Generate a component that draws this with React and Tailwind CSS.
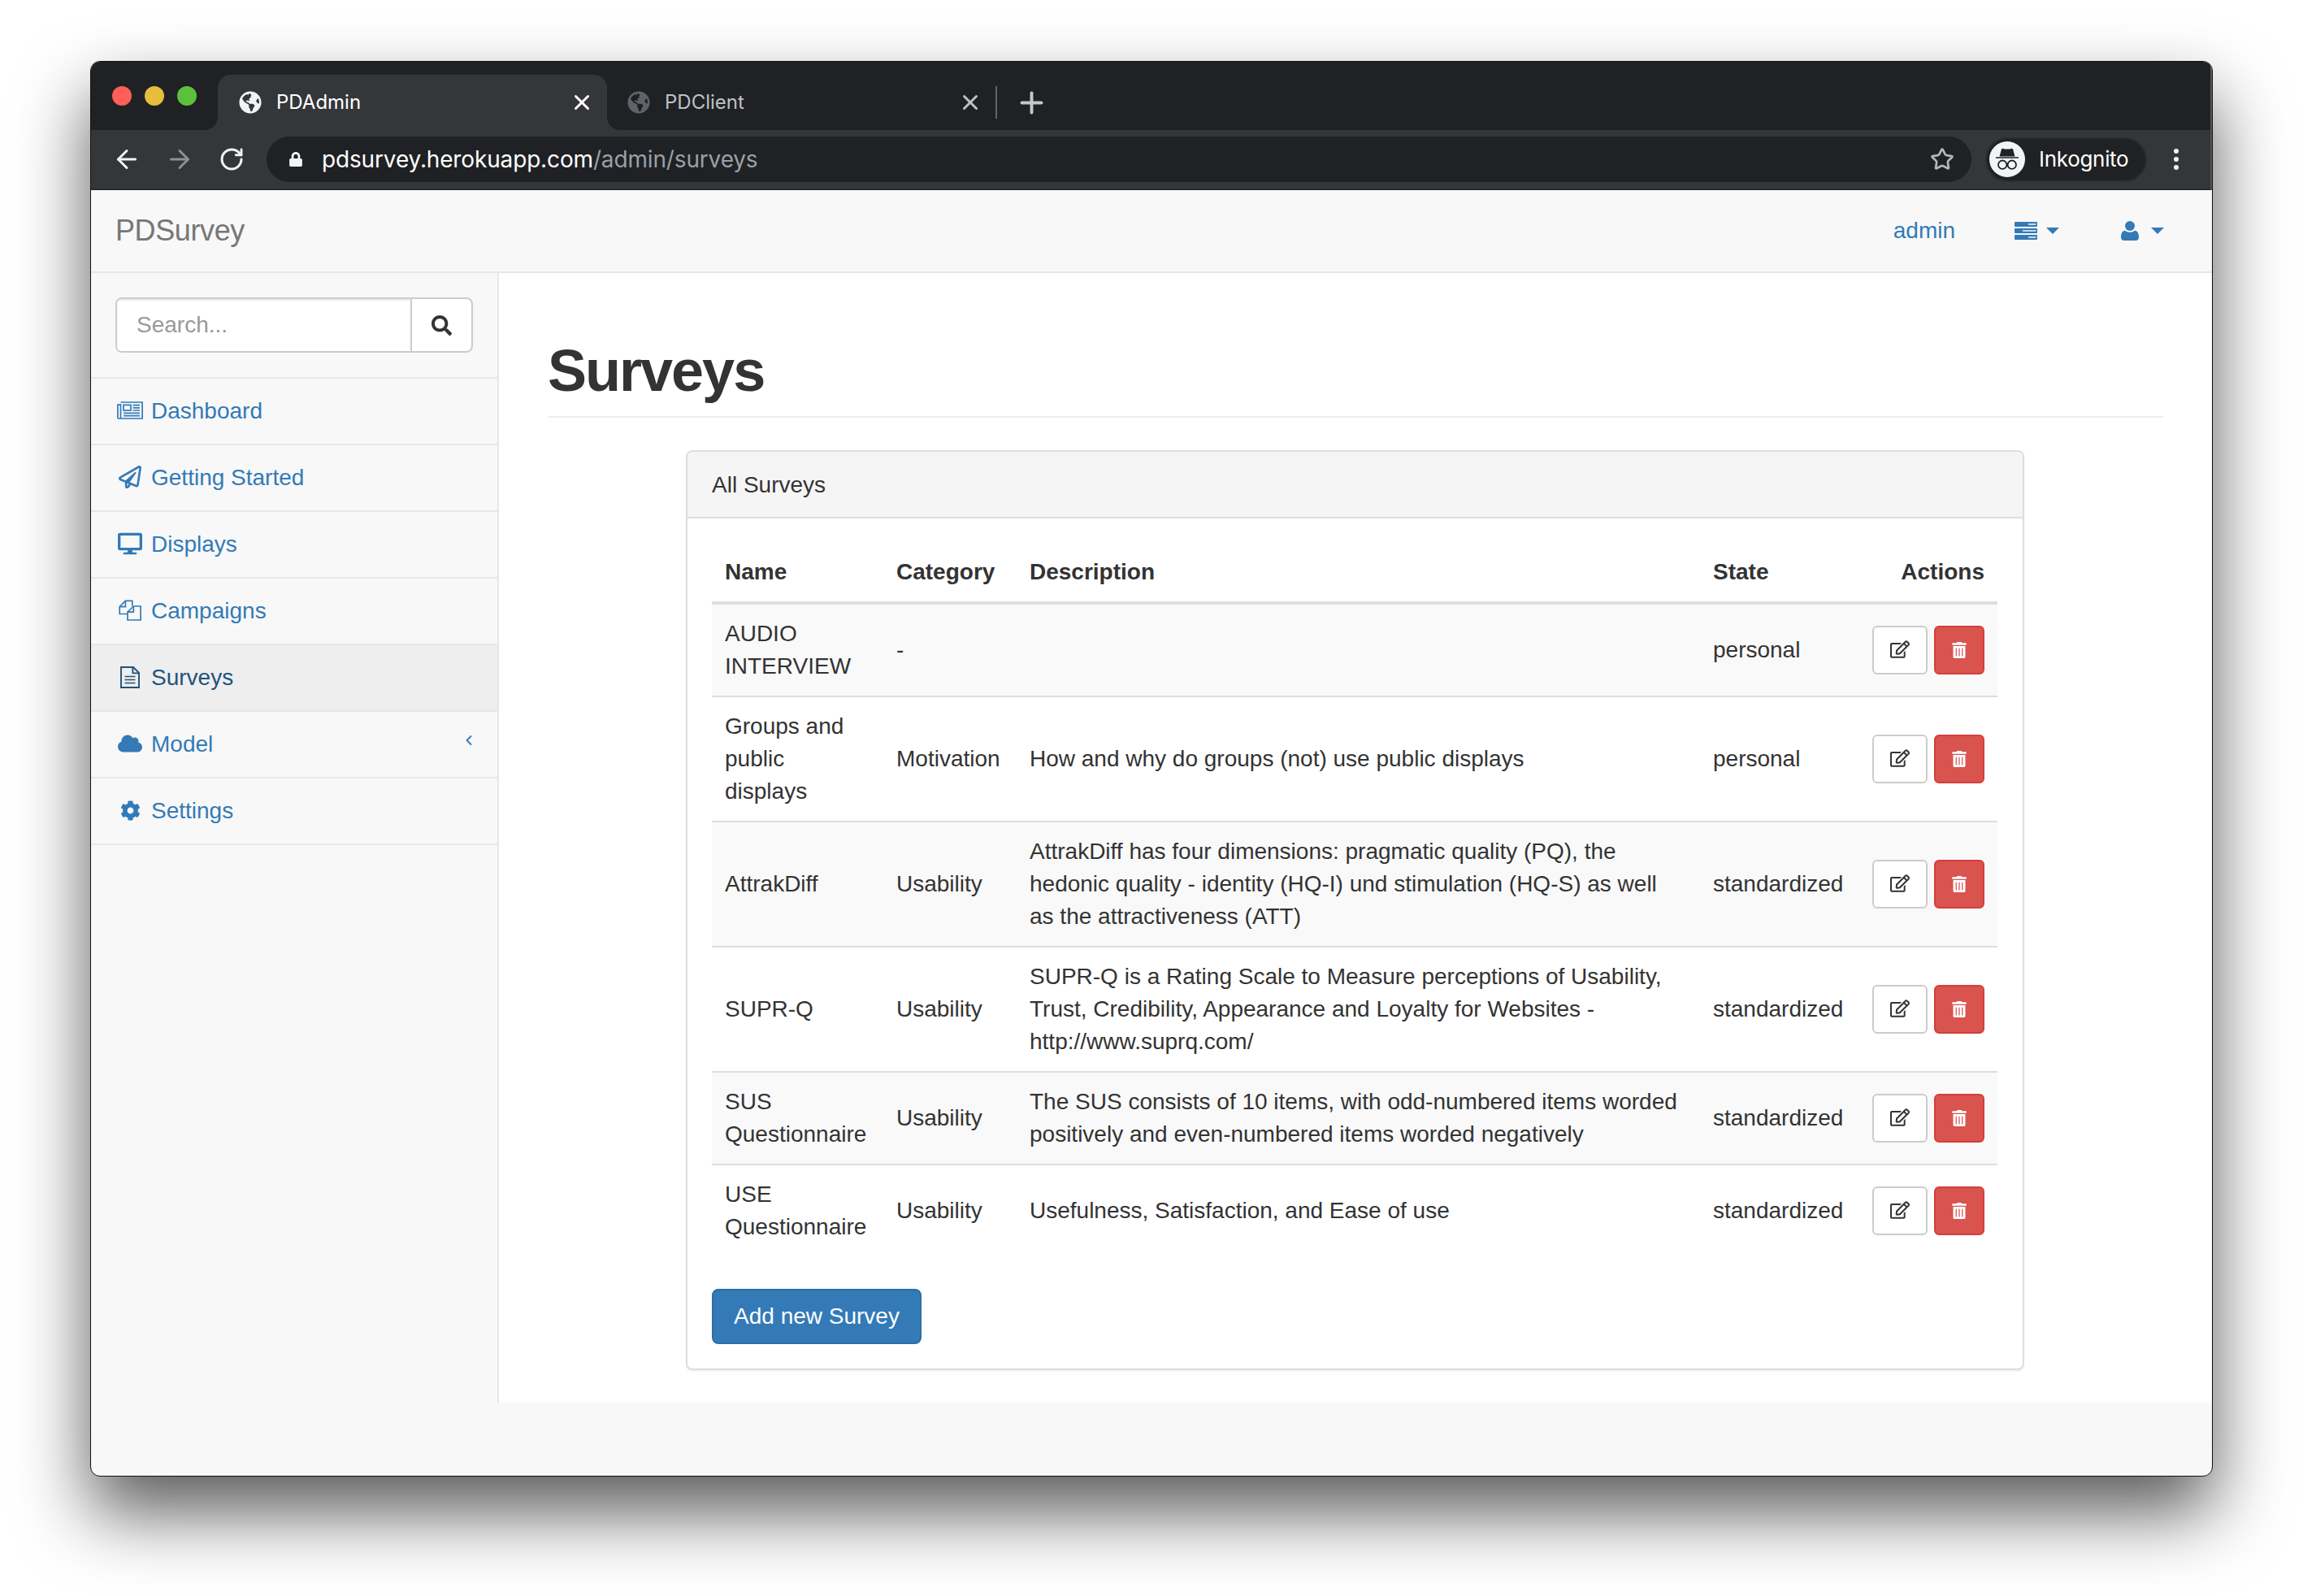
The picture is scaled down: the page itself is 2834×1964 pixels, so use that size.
import React from 'react';
import { ArrowLeft, ArrowRight, RotateCw, Plus, X, Star, ChevronLeft } from 'lucide-react';
import {
  FaGlobeAmericas,
  FaLock,
  FaRegPaperPlane,
  FaDesktop,
  FaCloud,
  FaCog,
  FaSearch,
  FaRegEdit,
  FaTrashAlt,
} from 'react-icons/fa';

const NewspaperIcon = () => (
  <svg width="32" height="22" viewBox="0 0 32 22" fill="none" stroke="currentColor" strokeWidth="1.7">
    <path d="M4.500 1h26.600v20H2.400A1.500 1.500 0 0 1 .9 19.500V4.200h3.600" />
    <path d="M4.500 3v18" />
    <rect x="8" y="4.400" width="9" height="6.600" />
    <path d="M19.500 4.600h8.500M19.500 7.800h8.500M19.500 11h8.500M8 14.400h20M8 17.600h20" />
  </svg>
);

const FilesIcon = () => (
  <svg width="28" height="26" viewBox="0 0 28 26" fill="none" stroke="currentColor" strokeWidth="1.7">
    <path d="M11 17.500H1.200V8.600L8.400 1.400h8.400v6.400" />
    <path d="M8.400 1.600v7H1.400" />
    <path d="M18.300 8h8.800v17H11V15l7.300-7z" />
    <path d="M18.300 8.400v6.800H11.200" />
  </svg>
);

const FileTextIcon = () => (
  <svg width="24" height="27" viewBox="0 0 24 27" fill="none" stroke="currentColor" strokeWidth="1.9">
    <path d="M1 1h15l7 7v18H1z" />
    <path d="M15.400 1v7.400H23" />
    <path d="M5.500 12.500h13M5.500 16.500h13M5.500 20.500h13" strokeWidth="1.500" />
  </svg>
);

const ServerIcon = () => (
  <svg width="28" height="22" viewBox="0 0 28 22">
    <rect y="0" width="28" height="6" rx="1" fill="currentColor" />
    <rect y="8" width="28" height="6" rx="1" fill="currentColor" />
    <rect y="16" width="28" height="6" rx="1" fill="currentColor" />
    <path d="M17 3h9.500M10 11h16.500M17 19h9.500" stroke="#f8f8f8" strokeWidth="1.600" />
  </svg>
);

const UserIcon = () => (
  <svg width="22" height="24" viewBox="0 0 22 24" fill="currentColor">
    <circle cx="11" cy="6" r="6" />
    <path d="M0 20c0-4.500 1.500-8 5-8.300 1.500 1.300 3.700 2.100 6 2.100s4.500-.8 6-2.100c3.500.3 5 3.800 5 8.300 0 2.500-1.700 4-3.700 4H3.700C1.700 24 0 22.500 0 20z" />
  </svg>
);

const IncognitoIcon = () => (
  <svg width="30" height="34" viewBox="0 0 30 34" fill="none" stroke="#202124">
    <path d="M5.500 13.500 8 4.500c.2-.7.8-1 1.400-.8l2.600.8h6l2.600-.8c.6-.2 1.200.1 1.400.8l2.500 9z" fill="#202124" stroke="none" />
    <path d="M1 15h28" strokeWidth="1.600" />
    <circle cx="9.200" cy="23.700" r="5.200" strokeWidth="1.800" />
    <circle cx="20.800" cy="23.700" r="5.200" strokeWidth="1.800" />
  </svg>
);

const Caret = () => (
  <span className="inline-block w-0 h-0 border-x-[8px] border-x-transparent border-t-[8px] border-t-[#337ab7]" />
);

const sideItems = [
  { label: 'Dashboard', icon: <NewspaperIcon /> },
  { label: 'Getting Started', icon: <FaRegPaperPlane size={28} /> },
  { label: 'Displays', icon: <FaDesktop size={30} /> },
  { label: 'Campaigns', icon: <FilesIcon /> },
  { label: 'Surveys', icon: <FileTextIcon />, active: true },
  { label: 'Model', icon: <FaCloud size={30} />, more: true },
  { label: 'Settings', icon: <FaCog size={25} /> },
];

const surveys = [
  { name: 'AUDIO INTERVIEW', category: '-', description: '', state: 'personal' },
  {
    name: 'Groups and public displays',
    category: 'Motivation',
    description: 'How and why do groups (not) use public displays',
    state: 'personal',
  },
  {
    name: 'AttrakDiff',
    category: 'Usability',
    description:
      'AttrakDiff has four dimensions: pragmatic quality (PQ), the hedonic quality - identity (HQ-I) und stimulation (HQ-S) as well as the attractiveness (ATT)',
    state: 'standardized',
  },
  {
    name: 'SUPR-Q',
    category: 'Usability',
    description:
      'SUPR-Q is a Rating Scale to Measure perceptions of Usability, Trust, Credibility, Appearance and Loyalty for Websites - http://www.suprq.com/',
    state: 'standardized',
  },
  {
    name: 'SUS Questionnaire',
    category: 'Usability',
    description:
      'The SUS consists of 10 items, with odd-numbered items worded positively and even-numbered items worded negatively',
    state: 'standardized',
  },
  {
    name: 'USE Questionnaire',
    category: 'Usability',
    description: 'Usefulness, Satisfaction, and Ease of use',
    state: 'standardized',
  },
];

const BrowserChrome = () => (
  <div className="font-['Inter',sans-serif] border-r-2 border-[#56575a]">
    {/* Tab strip */}
    <div className="h-[84px] bg-[#202124] flex items-end">
      <div className="w-[156px] h-full flex items-center gap-[16px] pl-[26px]">
        <span className="w-[24px] h-[24px] rounded-full bg-[#fe5f58] shrink-0" />
        <span className="w-[24px] h-[24px] rounded-full bg-[#e5bf3c] shrink-0" />
        <span className="w-[24px] h-[24px] rounded-full bg-[#5cc13a] shrink-0" />
      </div>
      <div className="relative w-[479px] h-[68px] bg-[#35363a] rounded-t-[16px] flex items-center pl-[26px] pr-[16px] text-white">
        <span className="absolute -left-[16px] bottom-0 w-[16px] h-[16px] bg-[#35363a]">
          <span className="block w-full h-full bg-[#202124] rounded-br-[16px]" />
        </span>
        <span className="absolute -right-[16px] bottom-0 w-[16px] h-[16px] bg-[#35363a]">
          <span className="block w-full h-full bg-[#202124] rounded-bl-[16px]" />
        </span>
        <FaGlobeAmericas size={28} className="text-[#f1f3f4] shrink-0" />
        <span className="ml-[18px] text-[24px] leading-none">PDAdmin</span>
        <X size={30} strokeWidth={2.4} className="ml-auto" />
      </div>
      <div className="w-[478px] h-[68px] flex items-center pl-[25px] pr-[16px] text-[#bdc1c6]">
        <FaGlobeAmericas size={28} className="text-[#5f6368] shrink-0" />
        <span className="ml-[18px] text-[24px] leading-none">PDClient</span>
        <X size={30} strokeWidth={2.4} className="ml-auto" />
      </div>
      <div className="h-[68px] flex items-center">
        <span className="w-[2px] h-[40px] bg-[#5f6368] shrink-0" />
        <Plus size={41} strokeWidth={2.3} className="ml-[22px] shrink-0 text-[#c4c7cb]" />
      </div>
    </div>
    {/* Toolbar */}
    <div className="h-[74px] bg-[#35363a] border-b-2 border-[#2a2b2e] flex items-center">
      <div className="w-[216px] flex items-center pl-[26px] text-[#f1f3f4]">
        <ArrowLeft size={36} strokeWidth={2} />
        <ArrowRight size={36} strokeWidth={2} className="ml-[29px] text-[#8e9094]" />
        <RotateCw size={32} strokeWidth={2.2} className="ml-[30px]" />
      </div>
      <div className="w-[2098px] h-[56px] rounded-full bg-[#202124] flex items-center pl-[27px] pr-[21px]">
        <FaLock size={18} className="text-[#f1f3f4] shrink-0" />
        <span className="ml-[23px] text-[28px] leading-none tracking-[-0.15px] text-white">
          pdsurvey.herokuapp.com<span className="text-[#9aa0a6]">/admin/surveys</span>
        </span>
        <Star size={30} strokeWidth={2.2} className="ml-auto text-[#b3b5b8]" />
      </div>
      <div className="ml-[17px] w-[199px] h-[55px] rounded-full bg-[#202124] border-2 border-[#2c2d30] flex items-center pl-[3px]">
        <span className="w-[44px] h-[44px] rounded-full bg-[#f1f3f4] flex items-center justify-center shrink-0">
          <IncognitoIcon />
        </span>
        <span className="ml-[17px] text-[26px] leading-none tracking-[-0.3px] text-white">Inkognito</span>
      </div>
      <div className="ml-[33px] flex flex-col gap-[4px]">
        <span className="w-[6px] h-[6px] rounded-full bg-[#f1f3f4]" />
        <span className="w-[6px] h-[6px] rounded-full bg-[#f1f3f4]" />
        <span className="w-[6px] h-[6px] rounded-full bg-[#f1f3f4]" />
      </div>
    </div>
  </div>
);

const Navbar = () => (
  <nav className="h-[102px] bg-[#f8f8f8] border-b-2 border-[#e7e7e7] flex items-center pl-[30px] pr-[59px]">
    <span className="text-[36px] leading-none tracking-[-0.4px] text-[#777]">PDSurvey</span>
    <div className="ml-auto flex items-center text-[#337ab7]">
      <span className="text-[28px] leading-none">admin</span>
      <span className="ml-[73px]"><ServerIcon /></span>
      <span className="ml-[11px] flex"><Caret /></span>
      <span className="ml-[76px]"><UserIcon /></span>
      <span className="ml-[15px] flex"><Caret /></span>
    </div>
  </nav>
);

const Sidebar = () => (
  <aside className="w-[502px] shrink-0 border-r-2 border-[#e7e7e7] bg-[#f8f8f8]">
    <div className="p-[30px] border-b-2 border-[#e7e7e7]">
      <div className="h-[68px] flex rounded-[8px] border-2 border-[#ccc] bg-white overflow-hidden">
        <input
          placeholder="Search..."
          className="flex-1 min-w-0 pl-[24px] text-[28px] outline-none bg-white shadow-[inset_0_2px_2px_rgba(0,0,0,0.075)] placeholder:text-[#999]"
        />
        <button className="w-[75px] shrink-0 border-l-2 border-[#ccc] flex items-center justify-center text-[#333]">
          <FaSearch size={25} />
        </button>
      </div>
    </div>
    {sideItems.map((item) => (
      <div
        key={item.label}
        className={`h-[82px] pb-[2px] border-b-2 border-[#e7e7e7] flex items-center pl-[30px] pr-[25px] text-[28px] ${
          item.active ? 'bg-[#eee] text-[#23527c]' : 'text-[#337ab7]'
        }`}
      >
        <span className="w-[36px] flex justify-center shrink-0">{item.icon}</span>
        <span className="ml-[8px] pt-[2px]">{item.label}</span>
        {item.more && <ChevronLeft size={20} strokeWidth={2.2} className="ml-auto -mt-[8px]" />}
      </div>
    ))}
  </aside>
);

const SurveysTable = () => (
  <table className="w-[1582px] table-fixed border-collapse text-[28px] leading-[40px] text-[#333]">
    <colgroup>
      <col className="w-[211px]" />
      <col className="w-[164px]" />
      <col className="w-[841px]" />
      <col className="w-[197px]" />
      <col className="w-[169px]" />
    </colgroup>
    <thead>
      <tr className="border-b-4 border-[#ddd]">
        <th className="p-[16px] text-left font-bold">Name</th>
        <th className="p-[16px] text-left font-bold">Category</th>
        <th className="p-[16px] text-left font-bold">Description</th>
        <th className="p-[16px] text-left font-bold">State</th>
        <th className="p-[16px] text-right font-bold">Actions</th>
      </tr>
    </thead>
    <tbody>
      {surveys.map((row, idx) => (
        <tr key={row.name} className={`border-t-2 border-[#ddd] first:border-t-0 ${idx % 2 === 0 ? 'bg-[#f9f9f9]' : ''}`}>
          <td className="p-[16px] align-middle">{row.name}</td>
          <td className="p-[16px] align-middle">{row.category}</td>
          <td className="p-[16px] align-middle">{row.description}</td>
          <td className="p-[16px] align-middle">{row.state}</td>
          <td className="py-[16px] pr-[16px] pl-0 align-middle">
            <div className="flex justify-end gap-[8px]">
              <button className="w-[68px] h-[60px] rounded-[6px] border-2 border-[#ccc] bg-white flex items-center justify-center text-[#333]">
                <FaRegEdit size={24} className="mb-[3px]" />
              </button>
              <button className="w-[62px] h-[60px] rounded-[6px] border-2 border-[#d43f3a] bg-[#d9534f] flex items-center justify-center text-white">
                <FaTrashAlt size={20} />
              </button>
            </div>
          </td>
        </tr>
      ))}
    </tbody>
  </table>
);

const App = () => {
  return (
    <div className="w-[2834px] h-[1964px] bg-white overflow-hidden pt-[75px] pl-[111px] font-['Liberation_Sans',sans-serif]">
      <div className="w-[2612px] h-[1742px] border border-[#111] rounded-[12px] overflow-hidden bg-[#f8f8f8] shadow-[0_44px_88px_rgba(0,0,0,0.65)]">
        <BrowserChrome />
        <Navbar />
        <div className="flex">
          <Sidebar />
          <main className="flex-1 bg-white pt-[81px] pl-[60px] pr-[60px] pb-[40px]">
            <div className="pb-[16px] border-b-2 border-[#eee] mb-[40px]">
              <h1 className="text-[72px] leading-[79px] font-bold tracking-[-2px] text-[#333]">Surveys</h1>
            </div>
            <section className="ml-[170px] w-[1647px] border-2 border-[#ddd] rounded-[8px] bg-white shadow-[0_2px_2px_rgba(0,0,0,0.05)]">
              <div className="h-[82px] pt-[2px] bg-[#f5f5f5] border-b-2 border-[#ddd] rounded-t-[6px] flex items-center px-[30px] text-[28px] text-[#333]">
                All Surveys
              </div>
              <div className="p-[30px]">
                <SurveysTable />
                <button className="mt-[40px] block w-[258px] h-[68px] rounded-[8px] border-2 border-[#2e6da4] bg-[#337ab7] text-[28px] text-white">
                  Add new Survey
                </button>
              </div>
            </section>
          </main>
        </div>
      </div>
    </div>
  );
};

export default App;
